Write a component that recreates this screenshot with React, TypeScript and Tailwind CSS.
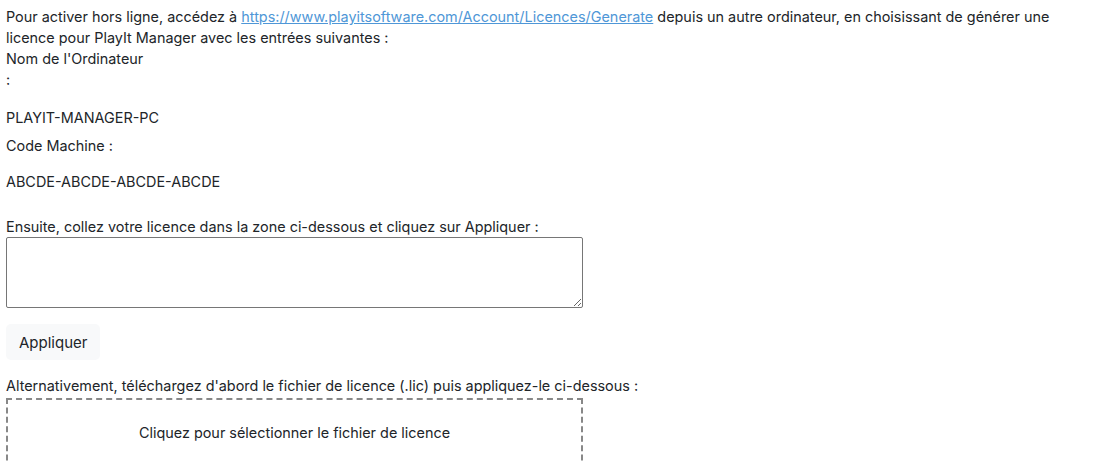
import React from "react";

export default function App() {
  return (
    <div
      className="px-[6px] pt-[6px] text-[14.42px] leading-[21px] text-[#212529] bg-white min-h-[464px]"
      style={{ fontFamily: "Inter, 'Noto Sans', sans-serif" }}
    >
      <p>
        Pour activer hors ligne, accédez à{" "}
        <a href="#" className="text-[#4f97d7] underline">
          https://www.playitsoftware.com/Account/Licences/Generate
        </a>{" "}
        depuis un autre ordinateur, en choisissant de générer une licence pour PlayIt Manager avec les entrées suivantes :
      </p>
      <div>Nom de l'Ordinateur</div>
      <div>:</div>
      <div className="mt-[17px]">PLAYIT-MANAGER-PC</div>
      <div className="mt-[7px]">Code Machine :</div>
      <div className="mt-[15px]">ABCDE-ABCDE-ABCDE-ABCDE</div>
      <div className="mt-[24px]">Ensuite, collez votre licence dans la zone ci-dessous et cliquez sur Appliquer :</div>
      <textarea className="block w-[577px] h-[71px] border border-[#767676] rounded-[2px] bg-white"></textarea>
      <button className="mt-[16px] block h-[36px] px-[13px] text-[15px] rounded-[5px] bg-[#f8f9fa] text-[#212529]">
        Appliquer
      </button>
      <div className="mt-[15px]">
        Alternativement, téléchargez d'abord le fichier de licence (.lic) puis appliquez-le ci-dessous :
      </div>
      <div className="mt-[2px] w-[577px] h-[72px] border-2 border-dashed border-[#888888] flex items-center justify-center box-border">
        <span className="-mt-[4px]">Cliquez pour sélectionner le fichier de licence</span>
      </div>
    </div>
  );
}
